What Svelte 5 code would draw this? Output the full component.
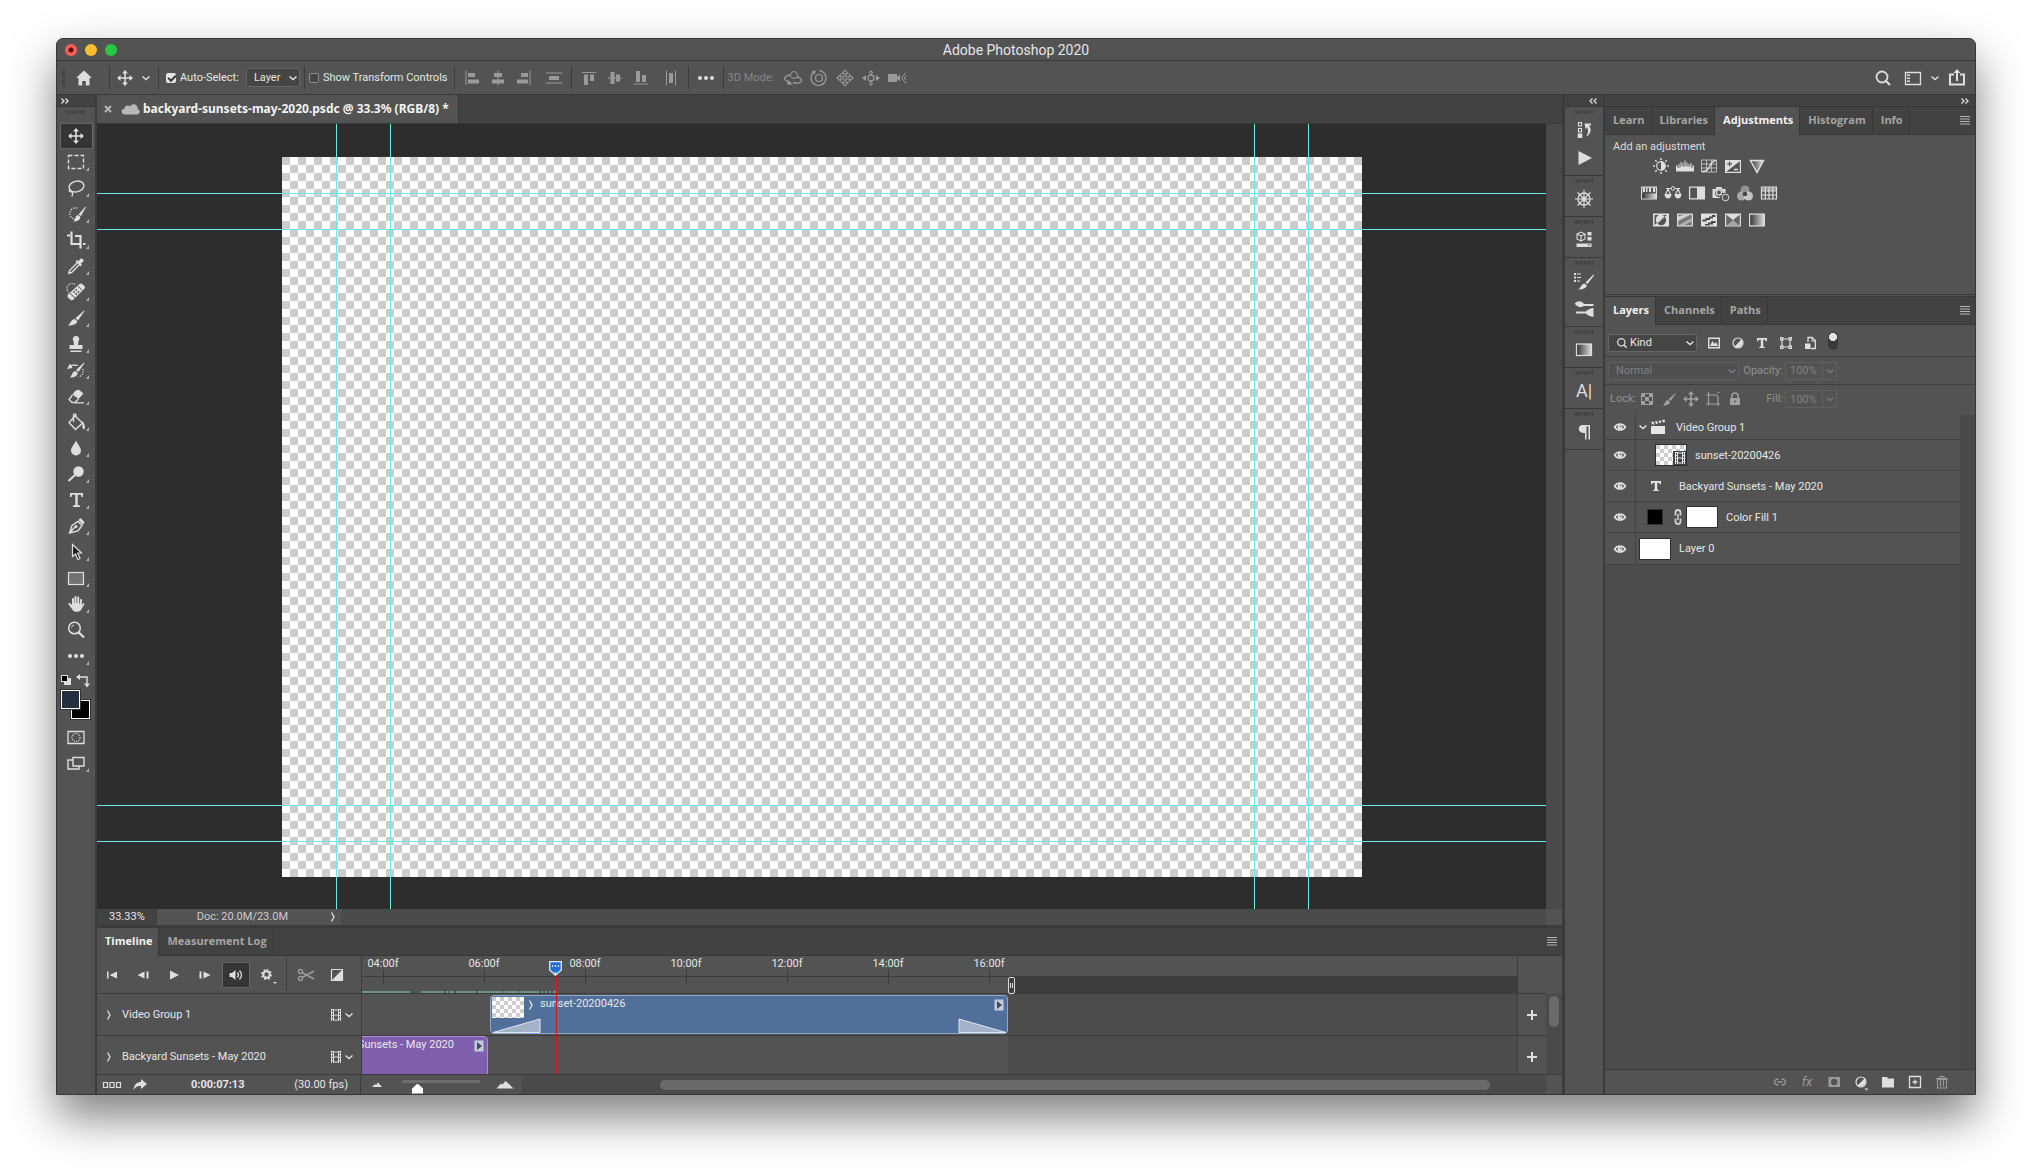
<script>
  const s = (d, w = 1.5) => `<path d="${d}" fill="none" stroke="currentColor" stroke-width="${w}"/>`;
  const dash = (d, w, a) => `<path d="${d}" fill="none" stroke="currentColor" stroke-width="${w}" stroke-dasharray="${a}"/>`;
  const f = (d) => `<path d="${d}" fill="currentColor" fill-rule="evenodd"/>`;
  const brush = 'M20 4.5 20.5 5 14 14.5 11.5 12.3ZM10.8 13 13.3 15.3C13 18 10 19.5 4 19.5 6.500 17.500 7 13.500 10.800 13Z';

  const icons = {
    move: s('M12 6V18M6 12H18', 1.6) + f('M12 4 15 7.500H9ZM12 20 15 16.500H9ZM4 12 7.500 9V15ZM20 12 16.500 9V15Z'),
    marquee: dash('M4.500 5.500H19.500V18.500H4.500Z', 1.4, '4 2'),
    lasso: '<ellipse cx="12.500" cy="10.500" rx="7.500" ry="5.300" transform="rotate(-12 12.500 10.500)" fill="none" stroke="currentColor" stroke-width="1.400"/>' + s('M6 13C4 15 6 16.500 8 15.500M7.500 15.500C10 17 8 19 8 20.500', 1.3),
    quick: dash('M13 6A5.500 5.500 0 1 0 10 17', 1.3, '1.300 1.300') + f('M21.500 4.500 22 5 17 14 14.500 12.500ZM14 13 16.500 15C16 18 13.500 19.500 9.500 19.500 11.500 17 11 14 14 13Z'),
    crop: s('M7.500 3.500V16H16M11 8H16.500V16M16.500 16V20.500M3 7.500H6M19 16H21.500', 2.2),
    dropper: s('M13 9 5.500 16.500 4.800 19.200 7.500 18.500 15 11', 1.4) + f('M11.500 7.500 13 6 14.200 7.200 16.500 4.700C18 3.500 20.500 6 19.300 7.500L16.800 9.800 18 11 16.500 12.500Z'),
    heal: dash('M11 4.500A5 5 0 1 0 5 12.500', 1.2, '1.200 1.200') + f('M15.500 4C16.500 3 17.800 3.300 20 5.500 21.500 7 21 8 20.300 8.800L9.500 19.500C8 20.700 7 20.500 5 18.500 3 16.500 3 15.500 4 14.500Z') + '<path d="M13.600 5.800 18.500 10.700M6.100 13.300 11 18" stroke="#535353"/><circle cx="12.200" cy="9.900" r=".9" fill="#535353"/><circle cx="14.400" cy="12" r=".9" fill="#535353"/><circle cx="10.200" cy="11.900" r=".9" fill="#535353"/><circle cx="12.300" cy="14" r=".9" fill="#535353"/>',
    brush: f(brush),
    stamp: f('M12 4A3 3 0 0 1 14.500 9L14 13H18.500V17H5.500V13H10L9.500 9A3 3 0 0 1 12 4ZM6.500 18.500H17.500V20H6.500Z'),
    history: f('M20 4.500 20.500 5 14.500 14 12 12ZM11.500 13 13.800 15C13 18 11 19.500 6 19.500 8.500 17 8 13.500 11.500 13ZM3 11 6 5.500 8.500 10Z') + s('M6 8.500C9 6 11 8 14 7', 1.3) + dash('M19 11C19.500 15 18 18 14.500 19', 1.2, '1.200 1.200'),
    eraser: f('M11 7 14.500 5.500 19.500 9.500 14.500 15 8.500 10.500Z') + s('M8.500 11 5 15.500 8 18.500H11L14.500 15M11 18.800H20', 1.3),
    bucket: s('M11 6 18.500 13 11.500 19.500 5 12.500ZM9.500 12V5C9.500 3.500 11.500 3.500 12 5V7', 1.4) + f('M18 11C20 12.500 21.500 16 20.800 18.500 20 20 18.500 19 18.500 17Z'),
    blur: f('M12 4.500C14 9 17 11.500 17 14.500A5 5 0 0 1 7 14.500C7 11.500 10 9 12 4.500Z'),
    dodge: '<circle cx="14.500" cy="9.500" r="5.200" fill="currentColor"/>' + s('M11 13 4.500 19', 2),
    type: f('M6 5H19V9H17.500L17 6.800H13.700V17L16 17.500V19H9V17.500L11.300 17V6.800H8L7.500 9H6Z'),
    typeS: f('M7 7H17V10.300H15.700L15.200 8.700H13.200V15.600L14.700 16V17H9.300V16L10.800 15.600V8.700H8.800L8.300 10.300H7Z'),
    pen: s('M5.500 19 8 11.500 14 7.500 18 11.500 14 17ZM5.500 19 11 13', 1.4) + '<circle cx="12" cy="12.500" r="1.500" fill="currentColor"/>' + f('M14.500 6 16.500 4 20.500 8 19 11Z'),
    select: '<path d="M8.500 4.500V16.500L11.500 14 13.800 19.500 16 18.500 13.700 13H17.500Z" fill="#1d1d1d" stroke="currentColor" stroke-width="1.200"/>',
    rect: '<rect x="4.500" y="6.500" width="15" height="12" fill="#727272" stroke="currentColor" stroke-width="1.200"/>',
    hand: f('M8 13V7A1 1 0 0 1 10 7V11H10.500V5A1 1 0 0 1 12.500 5V11H13.200V5.500A1 1 0 0 1 15.200 5.500V11.500H16V8A1 1 0 0 1 18 8L17.800 13 19 11.500C20 10.500 20.800 11.500 20.200 12.500L17 18C15.500 20.500 9.500 20.500 8.300 17.500L4.500 12.200C4 11 5.500 10.500 6.200 11.300Z'),
    zoom: '<circle cx="10.500" cy="10" r="5.800" fill="none" stroke="currentColor" stroke-width="1.500"/>' + s('M14.800 14.500 20 19.500', 2.4) + s('M7.500 9.500A3.500 3.500 0 0 1 10 7', 1),
    dots: '<circle cx="6" cy="12" r="2" fill="currentColor"/><circle cx="12" cy="12" r="2" fill="currentColor"/><circle cx="18" cy="12" r="2" fill="currentColor"/>',
    mask: s('M4 6.500H20V18.500H4Z', 1.3) + '<circle cx="12" cy="12.500" r="4" fill="none" stroke="currentColor" stroke-width="1.200" stroke-dasharray="1.200 1.200"/>',
    screen: s('M9 6.500H20V15H9ZM9 9H4V18H15V15', 1.4),
    home: f('M12 4.500 20 12H17.500V19.500H13.800V15H10.200V19.500H6.500V12H4Z'),
    chev: s('M8.500 10.500 12 13.500 15.500 10.500', 1.4),
    right: s('M10.500 7.500 13 12 10.500 16.500', 1.3),
    alignL: f('M5.500 4.500H6.500V19H5.500ZM8 7H15V11H8ZM8 13.500H19V17.500H8Z'),
    alignC: f('M11.500 4.500H12.500V7H16V11H12.500V13.500H18V17.500H12.500V19.500H11.500V17.500H6V13.500H11.500V11H8V7H11.500Z'),
    alignR: f('M17.500 4.500H18.500V19H17.500ZM9 7H16V11H9ZM5 13.500H16V17.500H5Z'),
    distV: f('M4 6.500H20V7.500H4ZM7 10H17V14H7ZM4 16.500H20V17.500H4Z'),
    alignT: f('M5 6H19V7H5ZM7 8.500H11V19H7ZM13 8.500H17V15H13Z'),
    alignM: f('M7.500 6H11.500V11.500H13V8.500H17V11.500H19V12.500H17V15.500H13V12.500H11.500V18H7.500V12.500H5V11.500H7.500Z'),
    alignB: f('M5 17.500H19V18.500H5ZM7 5H11V16H7ZM13 9H17V16H13Z'),
    distH: f('M7 4.500H8V19.500H7ZM10 7H14V17H10ZM16 4.500H17V19.500H16Z'),
    orbit: '<circle cx="13" cy="9" r="3.500" fill="none" stroke="currentColor"/>' + s('M9.500 9C5 9 2.500 12 4.500 14.500M16 11C20 12 21.500 14 20 16 18 18 15 17 12 16.500M5 14.500 8 16', 1.3) + f('M7 14 12 18.500H6Z'),
    roll: '<circle cx="12" cy="12" r="3.500" fill="none" stroke="currentColor" stroke-width="1.200"/>' + s('M7 6A7.500 7.500 0 1 0 12 4.500', 1.200) + f('M5 4.500 9 5 7 9Z'),
    pan3: s('M12 4 15 7.500H13V11H16.500V9L20 12 16.500 15V13H13V16.500H15L12 20 9 16.500H11V13H7.500V15L4 12 7.500 9V11H11V7.500H9Z', 1.100),
    slide3: s('M9 12A3 3 0 1 0 15 12 3 3 0 1 0 9 12', 1.300) + f('M12 4 14.500 7H9.500ZM12 20 14.500 17H9.500ZM3 12 7 9V15ZM21 12 17 9V15ZM11.300 6H12.700V9H11.300ZM11.300 15H12.700V18H11.300Z'),
    cam: f('M3 8H12V11L15 8.500V15.500L12 13V16H3Z') + s('M21 6.500 16.500 12 21 17.500M21 10 19 12 21 14', 1),
    search: '<circle cx="11" cy="11" r="5.500" fill="none" stroke="currentColor" stroke-width="1.800"/>' + s('M15 15 19 19', 2.2),
    workspace: s('M4.500 6.500H19.500V18.500H4.500Z', 1.3) + f('M6 8.500H9V10H6ZM6 11.500H9V13H6ZM6 14.500H9V16H6Z'),
    share: s('M9 8.500H5V18.500H19V8.500H15', 2) + s('M12 5V15', 2) + f('M12 3 15.500 7H8.500Z'),
    cloud: f('M7 17.500C2.500 17.500 2.500 12 6.500 11.800 6.500 8.500 10 7.500 12 9.300 14 5.500 20.500 7 19.500 12 23 13 22 17.500 19 17.500Z'),
    close: s('M9 9 15 15M15 9 9 15', 2),
    menu: f('M7 8H17V9H7ZM7 10.500H17V11.500H7ZM7 13H17V14H7ZM7 15.500H17V16.500H7Z'),
    fwd: s('M8.500 9.500 11 12 8.500 14.500M12.500 9.500 15 12 12.500 14.500', 1.3),
    back: s('M11.500 9.500 9 12 11.500 14.500M15.500 9.500 13 12 15.500 14.500', 1.3),
    panelHistory: s('M6.500 4.500H9.500V8H6.500ZM6.500 10.500H9.500V14H6.500Z', 1.200) + f('M5.700 15.500H10.300V20H5.700ZM12.500 5.500H19V7.500L16.800 7.500C20 11 19 16 14 19 16.500 14.500 16.500 12 15 9.200L13.500 11Z'),
    play: f('M6.500 5 20 12 6.500 19Z'),
    wheel: '<circle cx="12" cy="12" r="6" fill="none" stroke="currentColor" stroke-width="1.300"/><circle cx="12" cy="12" r="2" fill="none" stroke="currentColor"/>' + s('M12 3V21M3 12H21M5.500 5.500 18.500 18.500M18.500 5.500 5.500 18.500', 1.100),
    props: s('M5 6 9 4 13 6V11L9 13 5 11ZM5 6 9 8 13 6M9 8V13', 1.1) + f('M15.500 4H19.500V7.500H15.500ZM15.500 9H19.500V12.500H15.500ZM4.500 15.500H19.500V19H4.500Z') + '<path d="M15.500 16.500H18.500L17 18Z" fill="#535353"/>',
    brushSet: f('M2 4H4V6H2ZM2 7.500H4V9.500H2ZM2 11H4V13H2ZM5 4.500H9V5.500H5ZM5 8H9V9H5ZM5 11.500H8V12.500H5ZM21.500 5.500 22 6.500 15.500 15 13.500 13.500ZM12.500 14.500 14.800 16.300C14.500 19 11.500 20.500 6.500 20.500 9 18.500 9.500 15 12.500 14.500Z'),
    brushes: f('M3 6.500C5 3.500 10 3.500 12 7H21.500V9H12C10 10.500 7 10.500 5 9L2.500 6.500ZM4 14.500H14C16 12.500 19 11 21.500 11V20C18 19.500 15.500 18.500 14 16.500H4Z'),
    gradient: '<rect x="4.500" y="6" width="15" height="11.500" fill="url(#gr)" stroke="currentColor" stroke-width="1.200"/>',
    para: f('M11 5H18V19.500H16.500V6.500H14.500V19.500H13V13C5 13.500 5 5 11 5Z'),
    bright: '<circle cx="12" cy="12" r="4.300" fill="none" stroke="currentColor" stroke-width="1.200"/>' + f('M12 7.700A4.300 4.300 0 0 1 12 16.300Z') + s('M12 4V6M12 18V20M4 12H6M18 12H20M6.300 6.300 7.700 7.700M16.300 16.300 17.700 17.700M6.300 17.700 7.700 16.300M16.300 7.700 17.700 6.300', 1.500),
    levels: f('M3 17.500V11.500H4.500V14H5.500V10H6.500V13.500H7.500V8H8.500V12H9.500V9H10.500V13H11.500V6.500H12.500V12H13.500V8.500H14.500V13H15.500V10H16.500V12.500H17.500V9H18.500V14H19.500V11.500H21V17.500Z'),
    curves: s('M4.500 6H19.500V18H4.500ZM9.500 6V18M14.500 6V18M4.500 10H19.500M4.500 14H19.500', .7) + s('M5 17.500C15 17.500 11 7 19 6.500', 1.400),
    exposure: f('M4 6H20V19H4ZM5.200 17.800 18.800 7.200V17.800ZM8 7.500V9.300H6.200V10.500H8V12.300H9.200V10.500H11V9.300H9.200V7.500Z') + s('M13 15.500H17', 1.300),
    vibrance: '<path d="M5.500 6.500H18.500L12 18.500Z" fill="url(#gr)" stroke="currentColor" stroke-width="1.500"/>',
    hue: s('M4.600 6.100H19.400V17.900H4.600Z', 1.200) + f('M6 6.500H8V11H6ZM9 6.500H10.500V11H9ZM12 6.500H14V11H12ZM16 6.500H18V11H16Z') + '<rect x="5" y="12.500" width="14" height="5" fill="url(#gr)"/>',
    balance: s('M5 7.500H19M7 8 4.500 13.500M7 8 9.500 13.500M17 8 14.500 13.500M17 8 19.500 13.500', 1.100) + '<circle cx="12" cy="7.500" r="1.800" fill="#535353" stroke="currentColor"/>' + f('M3.500 13H10.500C10.500 19 3.500 19 3.500 13ZM13.500 13H20.500C20.500 19 13.500 19 13.500 13Z'),
    bw: s('M4.600 6.100H19.400V17.900H4.600Z', 1.300) + f('M12 6H19V18H12Z'),
    photo: f('M3.500 8H6.500L7.500 6H12.500L13.500 8H16.500V12H14A4 4 0 1 0 11 16V17H3.500Z') + '<circle cx="10" cy="11.500" r="2.600" fill="none" stroke="currentColor" stroke-width="1.300"/><circle cx="16.500" cy="16.500" r="3.300" fill="#535353" stroke="currentColor"/>',
    mixer: '<circle cx="12" cy="9" r="4.500" fill="#929292"/><circle cx="8.500" cy="15" r="4.500" fill="#a9a9a9"/><circle cx="15.500" cy="15" r="4.500" fill="#e0e0e0" fill-opacity=".8"/><circle cx="12" cy="13" r="2.300" fill="#444"/>',
    lookup: s('M4.500 6H19.500V18H4.500ZM8.300 6V18M12 6V18M15.800 6V18M4.500 10H19.500M4.500 14H19.500', 1.200) + '<path d="M5 6.500H19V9.500H5Z" fill="currentColor" fill-opacity=".5"/>',
    invert: '<path d="M4 5.500H20V18.500H4Z" fill="#e0e0e0"/><path d="M5.500 17 5.500 7H18Z" fill="#535353"/><path d="M8 15A4.800 4.800 0 0 1 15.500 8.500Z" fill="#e0e0e0"/><path d="M16 9A4.800 4.800 0 0 1 8.500 15.500Z" fill="#535353"/>',
    poster: '<rect x="4.600" y="6.100" width="14.800" height="11.800" fill="#777" stroke="currentColor" stroke-width="1.200"/>' + '<path d="M5 8.500 12 6.500H18L5 13Z" fill="#d0d0d0"/><path d="M5 17.500 19 10V13L11 17.500Z" fill="#b4b4b4"/>',
    threshold: '<path d="M4 5.500H20V18.500H4Z" fill="#e0e0e0"/><path d="M5.500 11.500H8.500V10H12V8.500H15V7H18.500V9H16V10.500H13V12H9.500V13.500H5.500ZM8 16H11V14.500H14V13H18.500V15H16V16.500H12.500V17.500H8Z" fill="#484848"/>',
    selective: '<rect x="4.600" y="6.100" width="14.800" height="11.800" fill="#666" stroke="currentColor" stroke-width="1.200"/>' + f('M4.500 6H19.500L12 12Z') + '<path d="M5 18H19L12 12Z" fill="#a5a5a5"/>',
    gmap: '<rect x="4.600" y="6.100" width="14.800" height="11.800" fill="url(#gr)" stroke="currentColor" stroke-width="1.200"/>',
    image: s('M6.700 7.200H17.300V16.800H6.700Z', 1.400) + f('M8 15 10.500 10 12.500 13 14 11 16 15Z'),
    adjust: '<circle cx="12" cy="12" r="5" fill="none" stroke="currentColor" stroke-width="1.200"/>' + f('M15.500 8.500A5 5 0 0 1 8.500 15.500Z'),
    adjustMenu: '<circle cx="12" cy="12" r="5" fill="none" stroke="currentColor" stroke-width="1.200"/>' + f('M15.500 8.500A5 5 0 0 1 8.500 15.500ZM15.500 18.500H19.500L17.500 20.500Z'),
    shape: s('M8 8H16V16H8Z', 1.200) + f('M6 6H9.500V9.500H6ZM14.500 6H18V9.500H14.500ZM6 14.500H9.500V18H6ZM14.500 14.500H18V18H14.500Z') + '<path d="M7.200 7.200H8.300V8.300H7.200ZM15.700 7.200H16.800V8.300H15.700ZM7.200 15.700H8.300V16.800H7.200ZM15.700 15.700H16.800V16.800H15.700Z" fill="#535353"/>',
    smart: s('M10 11V6.500H14L17.300 9.500V17.500H13', 1.300) + f('M7 12.500H12.500V18H7ZM13.500 6.500H14.500V9.500H17.500V10.500H13.500Z'),
    checker: s('M6.500 6.500H17.500V17.500H6.500Z', 1) + f('M6.500 6.500H10V10H6.500ZM14 6.500H17.500V10H14ZM10 10H14V14H10ZM6.500 14H10V17.500H6.500ZM14 14H17.500V17.500H14Z'),
    lockBrush: f('M18.500 6 19 6.500 13.500 14 11.500 12.300ZM11 13 13 14.800C12.500 17.500 10.500 18.500 6 18.500 8 17 8 13.500 11 13Z'),
    artboard: s('M7.500 5V18.500M5 8H15.500L17 10V19M5 17H19M16.500 6 18.500 5', 1.200),
    lock: f('M7 11H17V18H7ZM11.300 13.500V15.500H12.700V13.500Z') + s('M9 11V9A3 3 0 0 1 15 9V11', 1.600),
    eye: s('M6.500 12C9 8 15 8 17.500 12 15 16 9 16 6.500 12Z', 1.500) + '<circle cx="12" cy="12" r="2.500" fill="currentColor"/><circle cx="12.700" cy="11.500" r=".8" fill="#535353"/>',
    clap: f('M5 11H19V19H5ZM5 7 7.500 6.500 8.500 9.500H6.500ZM9 6.300 11 6 12 8.500 10 9ZM12.500 5.800 14.500 5.400 15.500 7.800 13.500 8.300ZM16 5 18.500 4.500 19 7 17 7.500Z'),
    link: s('M9.500 10.500V7.500A2.500 2.500 0 0 1 14.500 7.500V10.500M9.500 13.500V16.500A2.500 2.500 0 0 0 14.500 16.500V13.500', 1.800) + s('M12 9V15', 1.500),
    linkH: s('M10.500 9.300H8.500A2.800 2.800 0 0 0 8.500 14.700H10.500M13.500 9.300H15.500A2.800 2.800 0 0 1 15.500 14.700H13.500M9.500 12H14.500', 1.400),
    addMask: f('M6.500 7H18V17H6.500ZM12.200 8.700A3.200 3.200 0 1 0 12.200 15.200 3.200 3.200 0 1 0 12.200 8.700Z'),
    folder: f('M6 7H11L12 8.500H18V17.500H6Z'),
    add: s('M6.500 6.500H17.500V17.500H6.500Z', 1.300) + s('M12 9.500V14.500M9.500 12H14.500', 1.300),
    trash: s('M7.500 9.500H16.500V18H7.500ZM6 8.500H18M10 8V6.500H14V8M10.500 10V16.500M13.500 10V16.500', 1.100),
    first: f('M7 8.500H8.500V15.500H7ZM9.500 12 17 8.500V15.500Z'),
    prev: f('M6.500 12 13.500 8.500V15.500ZM15.500 8.500H17.500V15.500H15.500Z'),
    playS: f('M8 7.500 17 12 8 16.500Z'),
    next: f('M6.500 8.500H8.500V15.500H6.500ZM10.500 8.500 17.500 12 10.500 15.500Z'),
    audio: f('M5.500 10H8L11.500 7V17L8 14H5.500Z') + s('M13.500 9.500Q15.500 12 13.500 14.500M15.500 7.500Q19.500 12 15.500 16.500', 1.300),
    gear: '<circle cx="11.500" cy="11.500" r="3.200" fill="none" stroke="currentColor" stroke-width="2"/>' + dash('M11.500 7A4.500 4.500 0 1 1 11.490 7', 2, '1.800 1.734') + f('M18 19H22L20 21Z'),
    scissors: '<circle cx="6.500" cy="8.500" r="2" fill="none" stroke="currentColor" stroke-width="1.300"/><circle cx="6.500" cy="15.500" r="2" fill="none" stroke="currentColor" stroke-width="1.300"/>' + s('M8 9.500 20 16M8 14.500 20 8', 1.500),
    split: s('M6.500 6.500H17.500V17.500H6.500Z', 1.200) + f('M17.500 6.500V17.500H6.500Z'),
    film: s('M7.500 6V18M16.500 6V18M9.500 6V18M14.500 6V18M9.500 7H14.500M9.500 12H14.500M9.500 17H14.500', 1) + dash('M8.500 6V18M15.500 6V18', 2, '1 2'),
    boxes: s('M3.500 9.500H7.500V14.500H3.500ZM10 9.500H14V14.500H10ZM16.500 9.500H20.500V14.500H16.500Z', 1.200),
    export: f('M13 6 19 11 13 16V13C9.500 12.500 7.500 14 5.500 17 6 11.500 9 9 13 9Z'),
    hillS: f('M7 14 10 11 11 12 13 9.500 17 14Z'),
    hillL: f('M3.500 15.500 8 10.500 9.500 11.500 12.500 8 16 11 20.500 15.500Z'),
    plus: s('M12 7V17M7 12H17', 2),
    swap: s('M8 9H16V17', 1.400) + f('M5 9 9 6V12ZM16 19.500 13 15.500H19Z'),
    clipPlay: '<rect x="7.500" y="6.500" width="9" height="11" fill="#c3cbd8"/><path d="M10 8 15 12 10 16Z" fill="#444a63"/>'
  };

  const tools = [
    ['move', 'Move'], ['marquee', 'Marquee'], ['lasso', 'Lasso'], ['quick', 'Quick Selection'], ['crop', 'Crop'],
    ['dropper', 'Eyedropper'], ['heal', 'Spot Healing'], ['brush', 'Brush'], ['stamp', 'Clone Stamp'], ['history', 'History Brush'],
    ['eraser', 'Eraser'], ['bucket', 'Paint Bucket'], ['blur', 'Blur'], ['dodge', 'Dodge'], ['type', 'Type'], ['pen', 'Pen'],
    ['select', 'Path Selection'], ['rect', 'Rectangle'], ['hand', 'Hand'], ['zoom', 'Zoom'], ['dots', 'Edit Toolbar']
  ];
  const noMore = ['move', 'zoom'];
  const dock = [['panelHistory', 'play'], ['wheel'], ['props'], ['brushSet', 'brushes'], ['gradient'], ['char'], ['para']];
  const adjustments = [
    ['bright', 'levels', 'curves', 'exposure', 'vibrance'],
    ['hue', 'balance', 'bw', 'photo', 'mixer', 'lookup'],
    ['invert', 'poster', 'threshold', 'selective', 'gmap']
  ];
  const filters = ['image', 'adjust', 'typeS', 'shape', 'smart'];
  const locks = ['checker', 'lockBrush', 'move', 'artboard', 'lock'];
  const layers = [
    { name: 'Video Group 1', kind: 'folder' },
    { name: 'sunset-20200426', kind: 'video' },
    { name: 'Backyard Sunsets - May 2020', kind: 'text' },
    { name: 'Color Fill 1', kind: 'solid' },
    { name: 'Layer 0', kind: 'plain' }
  ];
  const footer = ['linkH', 'fx', 'addMask', 'adjustMenu', 'folder', 'add', 'trash'];
  const guides = [5, 10, 90, 95];
  const ticks = ['04:00f', '06:00f', '08:00f', '10:00f', '12:00f', '14:00f', '16:00f'].map((label, i) => ({ label, x: 21 + i * 101 }));
  const cached = [[0, 48], [58, 1], [60, 22], [84, 2], [87, 5], [94, 20], [116, 24], [141, 15], [157, 20], [179, 2], [183, 2], [187, 2], [191, 4]];
  const tracks = ['Video Group 1', 'Backyard Sunsets - May 2020'];
</script>

{#snippet icon(name)}
  <svg class="icon" viewBox="0 0 24 24" aria-hidden="true">{@html icons[name]}</svg>
{/snippet}

{#snippet btn(name, label, cls = '')}
  <button class="ib {cls}" aria-label={label}>{@render icon(name)}</button>
{/snippet}

<svg class="defs" aria-hidden="true">
  <linearGradient id="gr"><stop offset="0" stop-color="#333" /><stop offset="1" stop-color="#ddd" /></linearGradient>
</svg>

<div class="desktop">
  <div class="window">
    <header class="title">
      <div class="lights"><i class="red"></i><i class="yellow"></i><i class="green"></i></div>
      <h1>Adobe Photoshop 2020</h1>
    </header>

    <div class="options">
      <span class="vgrip"></span>
      {@render btn('home', 'Home', 'home')}
      <span class="sep"></span>
      {@render btn('move', 'Move tool', 'movetool')}
      {@render btn('chev', 'Tool presets', 'narrow')}
      <span class="sep"></span>
      <label class="check"><input type="checkbox" checked />Auto-Select:</label>
      <span class="drop layer"><select aria-label="Auto-select target"><option>Layer</option></select>{@render icon('chev')}</span>
      <span class="sep tight"></span>
      <label class="check last"><input type="checkbox" />Show Transform Controls</label>
      <span class="sep"></span>
      <div class="aligns">
        {#each ['alignL', 'alignC', 'alignR'] as n}{@render btn(n, n, 'dim')}{/each}
        {@render btn('distV', 'Distribute vertically', 'dim spaced')}
      </div>
      <span class="sep"></span>
      <div class="aligns">
        {#each ['alignT', 'alignM', 'alignB'] as n}{@render btn(n, n, 'dim')}{/each}
        {@render btn('distH', 'Distribute horizontally', 'dim spaced')}
      </div>
      <span class="sep"></span>
      {@render btn('dots', 'More options', 'more')}
      <span class="sep"></span>
      <span class="mode">3D Mode:</span>
      <div class="modes">
        {#each ['orbit', 'roll', 'pan3', 'slide3', 'cam'] as n}{@render btn(n, n, 'dim')}{/each}
      </div>
      <div class="actions">
        {@render btn('search', 'Search')}
        {@render btn('workspace', 'Workspace')}
        {@render btn('chev', 'Choose workspace', 'narrow')}
        {@render btn('share', 'Share')}
      </div>
    </div>

    <div class="body">
      <aside class="toolbar">
        <div class="strip">{@render btn('fwd', 'Expand tools')}</div>
        <span class="grip"></span>
        <div class="tools">
          {#each tools as [name, label], i}
            <button class="tool" class:active={i === 0} class:flyout={!noMore.includes(name)} aria-label={label}>{@render icon(name)}</button>
          {/each}
        </div>
        <div class="mini">
          <button class="default" aria-label="Default colors"></button>
          {@render btn('swap', 'Swap colors', 'swap')}
        </div>
        <div class="swatches">
          <button class="bg" aria-label="Background color"></button>
          <button class="fg" aria-label="Foreground color"></button>
        </div>
        <div class="tools">
          <button class="tool" aria-label="Quick mask">{@render icon('mask')}</button>
          <button class="tool flyout" aria-label="Screen mode">{@render icon('screen')}</button>
        </div>
      </aside>

      <main>
        <div class="doctabs">
          <div class="doctab">
            {@render btn('close', 'Close document', 'close')}
            <span class="cloud">{@render icon('cloud')}</span>
            <span>backyard-sunsets-may-2020.psdc @ 33.3% (RGB/8) *</span>
          </div>
        </div>
        <div class="work">
          <div class="stage">
            <div class="artboard">
              {#each guides as g}
                <i class="guide v" style="left: {g}%"></i>
                <i class="guide h" style="top: {g}%"></i>
              {/each}
            </div>
          </div>
          <div class="vscroll"></div>
        </div>
        <div class="status">
          <span class="pct">33.33%</span>
          <button class="docinfo"><span>Doc: 20.0M/23.0M</span>{@render icon('right')}</button>
          <span class="corner"></span>
        </div>

        <section class="timeline">
          <div class="tabs">
            <button class="tab on">Timeline</button>
            <button class="tab">Measurement Log</button>
            {@render btn('menu', 'Timeline menu', 'menu')}
          </div>
          <div class="tgrid">
            <div class="controls">
              {@render btn('first', 'First frame')}
              {@render btn('prev', 'Previous frame')}
              {@render btn('playS', 'Play')}
              {@render btn('next', 'Next frame')}
              {@render btn('audio', 'Audio', 'pressed')}
              {@render btn('gear', 'Settings')}
              <span class="sep"></span>
              {@render btn('scissors', 'Split at playhead', 'dim')}
              {@render btn('split', 'Transitions', 'split')}
            </div>
            <div class="heads">
              {#each tracks as t}
                <div class="head">
                  {@render btn('right', 'Expand ' + t, 'narrow')}
                  <span>{t}</span>
                  {@render btn('film', 'Track options', 'filmb')}
                  {@render btn('chev', 'Track menu', 'chevb')}
                </div>
              {/each}
            </div>
            <div class="lanes">
              <div class="ruler">
                {#each ticks as t}
                  <span class="tick" style="left: {t.x}px">{t.label}</span>
                {/each}
                <span class="outside"></span>
                {#each cached as [x, w]}<i class="cache" style="left: {x}px; width: {w}px"></i>{/each}
                <span class="handle"></span>
              </div>
              <div class="lane">
                <div class="clip blue">
                  <span class="cthumb"></span>
                  {@render icon('right')}
                  <span class="cname">sunset-20200426</span>
                  <span class="cplay">{@render icon('clipPlay')}</span>
                  <svg class="fade in" viewBox="0 0 49 15" aria-hidden="true"><path d="M1 14.500 48 1V14.500Z" /></svg>
                  <svg class="fade out" viewBox="0 0 49 15" aria-hidden="true"><path d="M48 14.500 1 1V14.500Z" /></svg>
                </div>
              </div>
              <div class="lane">
                <div class="clip purple">
                  <span class="cname">Backyard Sunsets - May 2020</span>
                  <span class="cplay">{@render icon('clipPlay')}</span>
                </div>
              </div>
              <svg class="playhead" viewBox="0 0 13 15" aria-hidden="true"><path d="M.700 .700H12.300V9L6.500 14.300 .700 9Z" fill="#1f6fd6" stroke="#dfe8f5" stroke-width="1.300" /><path d="M3 5H4.300M5.900 5H7.200M8.800 5H10.100M6.500 11V14" stroke="#fff" stroke-width="1.300" /></svg>
              <i class="needle"></i>
            </div>
            <div class="adds">
              <span></span>
              {@render btn('plus', 'Add media to Video Group 1')}
              {@render btn('plus', 'Add media to Backyard Sunsets')}
            </div>
            <div class="tscroll"><i></i></div>
          </div>
          <div class="tfoot">
            <div class="left">
              {@render btn('boxes', 'Convert to frame animation')}
              {@render btn('export', 'Render video')}
              <b>0:00:07:13</b>
              <span>(30.00 fps)</span>
            </div>
            <div class="zoomer">
              {@render icon('hillS')}
              <input type="range" min="0" max="100" value="15" aria-label="Timeline zoom" />
              {@render icon('hillL')}
            </div>
            <div class="hscroll"><i></i></div>
            <span class="corner"></span>
          </div>
        </section>
      </main>

      <aside class="dock">
        <div class="strip">{@render btn('back', 'Expand panels')}</div>
        {#each dock as set}
          <div class="dockset">
            <span class="grip"></span>
            {#each set as n}
              <button class="ib" aria-label={n}>
                {#if n === 'char'}<span class="char">A|</span>{:else}{@render icon(n)}{/if}
              </button>
            {/each}
          </div>
        {/each}
      </aside>

      <aside class="panels">
        <div class="strip">{@render btn('fwd', 'Collapse panels')}</div>
        <section class="adj">
          <div class="tabs">
            {#each ['Learn', 'Libraries', 'Adjustments', 'Histogram', 'Info'] as t}
              <button class="tab" class:on={t === 'Adjustments'}>{t}</button>
            {/each}
            {@render btn('menu', 'Adjustments menu', 'menu')}
          </div>
          <p>Add an adjustment</p>
          <div class="adjrows">
            {#each adjustments as row}
              <div>{#each row as n}{@render btn(n, n)}{/each}</div>
            {/each}
          </div>
        </section>
        <section class="layers">
          <div class="tabs">
            {#each ['Layers', 'Channels', 'Paths'] as t}
              <button class="tab" class:on={t === 'Layers'}>{t}</button>
            {/each}
            {@render btn('menu', 'Layers menu', 'menu')}
          </div>
          <div class="row filter">
            <span class="drop kind"><span class="mag">{@render icon('search')}</span><select aria-label="Filter kind"><option>Kind</option></select>{@render icon('chev')}</span>
            <div class="filters">{#each filters as n}{@render btn(n, n)}{/each}</div>
            <input class="toggle" type="checkbox" aria-label="Layer filtering" />
          </div>
          <div class="row blend">
            <span class="drop mode2"><select aria-label="Blend mode" disabled><option>Normal</option></select>{@render icon('chev')}</span>
            <label class="num"><span>Opacity:</span><input type="text" value="100%" disabled /></label>
            <button class="numdrop" aria-label="Opacity slider" disabled>{@render icon('chev')}</button>
          </div>
          <div class="row lockrow">
            <span class="locklabel">Lock:</span>
            <div class="locks">{#each locks as n}{@render btn(n, n)}{/each}</div>
            <label class="num short"><span>Fill:</span><input type="text" value="100%" disabled /></label>
            <button class="numdrop" aria-label="Fill slider" disabled>{@render icon('chev')}</button>
          </div>
          <div class="list">
            {#each layers as l}
              <div class="item {l.kind}">
                {@render btn('eye', 'Visibility of ' + l.name, 'eyeb')}
                <div class="content">
                  {#if l.kind === 'folder'}
                    <span class="tw">{@render icon('chev')}</span><span class="clap">{@render icon('clap')}</span>
                  {:else if l.kind === 'video'}
                    <span class="thumb trans"><span class="badge">{@render icon('film')}</span></span>
                  {:else if l.kind === 'text'}
                    <span class="tt">{@render icon('typeS')}</span>
                  {:else if l.kind === 'solid'}
                    <span class="black"></span><span class="chain">{@render icon('link')}</span><span class="thumb"></span>
                  {:else}
                    <span class="thumb"></span>
                  {/if}
                  <span class="name">{l.name}</span>
                </div>
              </div>
            {/each}
          </div>
          <div class="foot">
            {#each footer as n}
              {#if n === 'fx'}<button class="ib dim fx">fx</button>
              {:else}{@render btn(n, n, n === 'linkH' || n === 'addMask' || n === 'trash' ? 'dim' : '')}{/if}
            {/each}
          </div>
        </section>
      </aside>
    </div>
  </div>
</div>

<style>
  :global(body) { background: #fff; }
  * { box-sizing: border-box; }
  .defs { position: absolute; width: 0; height: 0; }
  .desktop {
    display: flex; min-height: 100vh; padding: 38px 56px 74px; background: #fff;
    font-family: Roboto, "Liberation Sans", sans-serif; font-size: 11px; line-height: 16px; color: #e6e6e6;
  }
  .window {
    flex: 1; min-width: 0; display: flex; flex-direction: column; overflow: hidden;
    background: #535353; border: 1px solid #383838; border-radius: 7px 7px 0 0;
    box-shadow: 0 22px 46px rgba(0, 0, 0, .5);
  }
  button { font: inherit; color: inherit; background: none; border: 0; padding: 0; margin: 0; }
  .icon { display: block; width: 24px; height: 24px; flex: none; }
  .ib { display: flex; align-items: center; justify-content: center; width: 24px; height: 24px; flex: none; color: #dedede; }
  .dim { color: #9a9a9a; }
  .narrow { width: 16px; }

  .title { display: flex; align-items: center; justify-content: center; height: 22px; border-bottom: 1px solid #383838; position: relative; flex: none; }
  .title h1 { margin: 0; font-size: 14px; font-weight: 400; line-height: 20px; }
  .lights { position: absolute; left: 8px; display: flex; gap: 8px; }
  .lights i { width: 12px; height: 12px; border-radius: 50%; }
  .red { background: radial-gradient(circle, #5a0d0a 2px, #fb5f57 3px); }
  .yellow { background: #fdbc2e; }
  .green { background: #28c840; }

  .options { display: flex; align-items: center; height: 34px; padding: 0 6px 0 5px; border-bottom: 1px solid #383838; flex: none; }
  .vgrip { width: 3px; height: 20px; background: repeating-linear-gradient(#3c3c3c 0 1px, #535353 1px 2px); }
  .home { margin: 0 13px 0 7px; }
  .sep { width: 1px; height: 23px; background: #3c3c3c; flex: none; }
  .movetool { margin: 0 1px 0 3px; }
  .options .narrow { margin-right: 4px; }
  .check { display: flex; align-items: center; gap: 4px; padding: 0 7px; white-space: nowrap; }
  .check.last { padding: 0 6px 0 4px; }
  .check input { appearance: none; width: 10px; height: 10px; margin: 0; border: 1px solid #8d8d8d; border-radius: 2px; background: #454545; }
  .check input:checked { background: #e3e3e3; border-color: #e3e3e3; position: relative; }
  .check input:checked::after { content: ""; position: absolute; left: 1px; top: 1px; width: 6px; height: 3px; border: solid #333; border-width: 0 0 2px 2px; transform: rotate(-45deg); }
  .drop { display: flex; align-items: center; position: relative; background: #454545; border: 1px solid #666; border-radius: 2px; }
  .drop select { appearance: none; width: 100%; height: 100%; border: 0; background: none; color: inherit; font: inherit; padding: 0 0 0 7px; margin: 0; opacity: 1; }
  .drop > .icon { position: absolute; right: -6px; }
  .layer { width: 54px; height: 19px; margin-right: 4px; }
  .aligns { display: flex; gap: 2px; padding: 0 5px; }
  .spaced { margin-left: 4px; }
  .more { margin: 0 5px; }
  .mode { margin: 0 7px 0 4px; color: #868686; white-space: nowrap; }
  .modes { display: flex; gap: 2px; }
  .actions { display: flex; align-items: center; gap: 6px; margin-left: auto; }
  .actions .narrow { margin: 0 -4px; }

  .body { display: flex; flex: 1; min-height: 0; background: #3b3b3b; }
  .strip { display: flex; align-items: center; height: 12px; background: #424242; border-bottom: 1px solid #383838; flex: none; }
  .strip .ib { height: 11px; }
  .grip { display: block; width: 20px; height: 4px; margin: 3px auto; background: repeating-linear-gradient(90deg, #3e3e3e 0 1px, #535353 1px 2px); flex: none; }

  .toolbar { display: flex; flex-direction: column; width: 38px; margin-right: 2px; background: #535353; flex: none; }
  .toolbar .strip .ib { margin-left: -4px; }
  .tools { display: flex; flex-direction: column; align-items: center; }
  .toolbar .grip + .tools { margin-top: 6px; }
  .tool { display: flex; align-items: center; justify-content: center; width: 33px; height: 26px; position: relative; color: #dedede; border: 1px solid transparent; border-radius: 2px; }
  .tool.active { background: #353535; border-color: #676767; }
  .flyout::after { content: ""; position: absolute; right: 3px; bottom: 3px; border: solid transparent; border-width: 4px 0 0 4px; border-bottom: 0; border-right: 3px solid #b0b0b0; }
  .mini { display: flex; align-items: center; justify-content: space-between; height: 21px; padding: 0 0 0 4px; }
  .default { width: 10px; height: 10px; background: linear-gradient(#000, #000) 1px 1px / 5px 5px no-repeat, linear-gradient(#ddd, #ddd) 0 0 / 7px 7px no-repeat, linear-gradient(#ddd, #ddd) 3px 3px / 7px 7px no-repeat; }
  .swatches { position: relative; height: 34px; }
  .swatches button { position: absolute; width: 19px; height: 19px; border: 1px solid #fff; outline: 1px solid #333; }
  .fg { left: 4px; top: 0; background: #232f40; }
  .bg { left: 14px; top: 10px; background: #000; }

  main { flex: 1; min-width: 0; display: flex; flex-direction: column; margin-right: 3px; }
  .doctabs { display: flex; height: 29px; background: #424242; border-bottom: 1px solid #383838; flex: none; }
  .doctab { display: flex; align-items: center; padding-right: 9px; background: #535353; border-right: 1px solid #383838; font-family: "Noto Sans", "Open Sans", sans-serif; font-size: 12px; font-weight: 700; color: #f2f2f2; white-space: nowrap; }
  .close { color: #b5b5b5; width: 22px; }
  .cloud { color: #b8b8b8; margin-left: -1px; margin-right: 1px; }
  .work { flex: 1; display: flex; min-height: 0; }
  .stage { flex: 1; display: grid; place-content: center; overflow: hidden; padding-left: 1px; background: #2d2d2d; }
  .artboard { position: relative; width: 1080px; height: 720px; background: repeating-conic-gradient(#fff 0 25%, #ccc 0 50%) 0 0 / 16px 16px; }
  .guide { position: absolute; background: #6ce8ec; }
  .guide.v { width: 1px; top: -1000px; bottom: -1000px; }
  .guide.h { height: 1px; left: -2000px; right: -2000px; }
  .vscroll { width: 16px; background: #4a4a4a; }
  .status { display: flex; height: 16px; background: #4b4b4b; flex: none; }
  .pct { width: 60px; padding-left: 12px; background: #424242; }
  .docinfo { display: flex; align-items: center; justify-content: flex-end; width: 184px; gap: 33px; background: #535353; color: #ccc; }
  .docinfo .icon { margin-right: -4px; color: #e0e0e0; }
  .corner { width: 16px; margin-left: auto; background: #535353; }

  .tabs { display: flex; height: 28px; background: #424242; border-bottom: 1px solid #383838; flex: none; font-family: "Open Sans", "Noto Sans", sans-serif; font-size: 11px; }
  .tab { padding: 0 6px 1px 8px; color: #a6a6a6; font-weight: 700; border-right: 1px solid #383838; white-space: nowrap; }
  .tab.on { background: #535353; color: #f2f2f2; margin-bottom: -1px; padding-bottom: 2px; }
  .tabs .menu { margin: 1px -2px 0 auto; color: #b5b5b5; }

  .timeline { display: flex; flex-direction: column; margin-top: 3px; background: #535353; flex: none; }
  .tgrid { display: grid; grid-template-columns: 264px 1fr 28px 16px; grid-template-rows: 38px 80px; border-bottom: 1px solid #3c3c3c; overflow: hidden; }
  .controls { display: flex; align-items: center; gap: 7px; padding-left: 3px; border-bottom: 1px solid #3c3c3c; grid-column: 1; }
  .controls .sep { height: 32px; }
  .pressed { width: 28px; height: 26px; margin: 0 -2px; background: #353535; border: 1px solid #676767; border-radius: 2px; }
  .heads { grid-column: 1; grid-row: 2; }
  .head { display: flex; align-items: center; height: 42px; padding: 1px 0 0 4px; border-bottom: 1px solid #3c3c3c; }
  .head .narrow { margin-right: 5px; }
  .filmb { margin-left: auto; width: 14px; }
  .chevb { width: 12px; margin-right: 6px; }
  .lanes { grid-column: 2; grid-row: 1 / 3; position: relative; overflow: hidden; border: solid #3c3c3c; border-width: 0 1px; }
  .ruler { position: relative; height: 38px; background: linear-gradient(#3c3c3c, #3c3c3c) 0 20px / 100% 1px no-repeat; border-bottom: 1px solid #3c3c3c; }
  .tick { position: absolute; top: 0; width: 60px; margin-left: -30px; text-align: center; }
  .tick::after { content: ""; position: absolute; left: 30px; top: 13px; width: 1px; height: 15px; background: #3c3c3c; }
  .outside { position: absolute; left: 646px; right: 0; top: 20px; bottom: 0; background: #3e3e3e; }
  .cache { position: absolute; bottom: 0; height: 2px; background: #6b9488; }
  .handle { position: absolute; left: 646px; top: 21px; width: 7px; height: 17px; border: 1px solid #ddd; border-radius: 2px; background: linear-gradient(90deg, #ddd 0 1px, transparent 1px 2px, #ddd 2px 3px) 1px 5px / 3px 5px no-repeat #3e3e3e; }
  .lane { position: relative; height: 42px; border-bottom: 1px solid #3c3c3c; background: linear-gradient(90deg, #535353 646px, #4c4c4c 646px); }
  .clip { position: absolute; border-radius: 4px; color: #e8e8e8; white-space: nowrap; }
  .blue { left: 128px; top: 1px; width: 518px; height: 39px; background: #50709b; border: 1px solid #8fa9cd; display: flex; align-items: flex-start; }
  .cthumb { width: 32px; height: 21px; margin: 1px 0 0 1px; background: repeating-conic-gradient(#fff 0 25%, #ccc 0 50%) 0 0 / 8px 8px; }
  .blue > .icon { margin: -3px -3px 0 -5px; }
  .cplay { position: absolute; right: -4px; top: -3px; }
  .fade { position: absolute; bottom: 0; width: 49px; height: 15px; fill: #a3b2c9; stroke: #dfe5ee; }
  .fade.in { left: 1px; }
  .fade.out { right: 0; }
  .purple { right: calc(100% - 126px); top: 0; height: 44px; background: #7f5fae; border: 1px solid #ab8fd6; padding: 0 33px 0 20px; }
  .playhead { position: absolute; left: 187px; top: 5px; width: 13px; height: 15px; }
  .needle { position: absolute; left: 194px; top: 19px; bottom: 0; width: 1px; background: #d01818; }
  .adds { grid-column: 3; grid-row: 1 / 3; display: flex; flex-direction: column; }
  .adds > * { height: 42px; width: 28px; border-bottom: 1px solid #3c3c3c; flex: none; }
  .adds > span { height: 38px; }
  .tscroll { grid-column: 4; grid-row: 2; background: #4a4a4a; }
  .tscroll i { display: block; width: 10px; height: 31px; margin: 2px 0 0 3px; border-radius: 5px; background: #6a6a6a; }
  .tfoot { display: flex; height: 19px; background: #4a4a4a; }
  .left { display: flex; align-items: center; width: 264px; background: #535353; border-right: 1px solid #3c3c3c; padding-left: 3px; }
  .tfoot .ib { height: 19px; margin-right: 4px; }
  .left b { margin: 0 auto 0 35px; font-weight: 700; }
  .left span { margin-right: 12px; }
  .zoomer { display: flex; align-items: center; justify-content: space-between; width: 160px; padding: 0 4px; background: #535353; color: #dedede; }
  .zoomer input { appearance: none; width: 78px; height: 18px; margin: 0; background: linear-gradient(#6e6e6e, #6e6e6e) 0 4px / 100% 3px no-repeat; }
  .zoomer input::-webkit-slider-thumb { appearance: none; width: 11px; height: 10px; margin-top: 8px; background: #fff; clip-path: polygon(50% 0, 100% 50%, 100% 100%, 0 100%, 0 50%); }
  .hscroll { flex: 1; padding: 5px 56px 0 139px; }
  .hscroll i { display: block; height: 10px; border-radius: 5px; background: #6a6a6a; }

  .dock { width: 38px; margin-right: 2px; background: #535353; flex: none; display: flex; flex-direction: column; }
  .dock .strip .ib { margin-left: auto; margin-right: -2px; }
  .dockset { padding-bottom: 3px; border-bottom: 1px solid #383838; }
  .dockset .grip { margin-bottom: 2px; }
  .dockset .ib { width: 100%; height: 28px; }
  .char { font-size: 18px; line-height: 24px; }

  .panels { width: 370px; flex: none; display: flex; flex-direction: column; background: #535353; }
  .panels .strip .ib { margin-left: auto; margin-right: -2px; }
  .adj { height: 188px; border-bottom: 1px solid #383838; }
  .adj p { margin: 4px 8px 0; color: #dcdcdc; }
  .adjrows { display: flex; flex-direction: column; align-items: center; width: 208px; gap: 3px; margin-top: -1px; }
  .adjrows div { display: flex; }
  .layers { flex: 1; display: flex; flex-direction: column; margin-top: 1px; border-top: 1px solid #383838; background: #4c4c4c; }
  .row { display: flex; align-items: center; background: #535353; border-bottom: 1px solid #3f3f3f; padding-left: 3px; flex: none; }
  .filter { height: 32px; padding-top: 4px; }
  .kind { width: 89px; height: 18px; }
  .kind select { padding-left: 21px; }
  .mag { position: absolute; left: 5px; top: 0; }
  .mag .icon { width: 16px; height: 16px; }
  .filters { display: flex; padding: 0 6px 0 5px; }
  .toggle { appearance: none; width: 10px; height: 18px; margin: -3px 0 0; border-radius: 5px; background: radial-gradient(circle 4px at 5px 5px, #e0e0e0 4px, transparent 4px) #3a3a3a; }
  .blend { height: 28px; }
  .mode2 { width: 131px; height: 18px; background: #505050; border-color: #606060; color: #808080; }
  .mode2 select, .num input { color: #808080; }
  .num { display: flex; align-items: center; justify-content: flex-end; gap: 2px; width: 84px; color: #8f8f8f; }
  .num input { width: 38px; height: 18px; padding: 0 0 0 4px; border: 1px solid #606060; border-radius: 2px 0 0 2px; background: none; font: inherit; }
  .numdrop { width: 14px; height: 18px; border: 1px solid #606060; border-left: 0; display: flex; align-items: center; justify-content: center; color: #777; flex: none; }
  .lockrow { height: 30px; border-bottom: 0; padding: 0 0 2px 5px; color: #8f8f8f; }
  .locklabel { width: 26px; }
  .locks { display: flex; }
  .locks .ib { color: #a0a0a0; width: 22px; }
  .num.short { width: 77px; }
  .list { display: flex; flex-direction: column; padding-right: 15px; flex: 1; background: linear-gradient(90deg, transparent calc(100% - 15px), #494949 0); }
  .item { display: flex; height: 31px; background: #535353; border-bottom: 1px solid #434343; }
  .item.folder { height: 25px; }
  .item.plain { height: 32px; }
  .eyeb { width: 31px; height: 100%; border-right: 1px solid #434343; }
  .content { display: flex; align-items: center; flex: 1; }
  .name { padding-top: 1px; white-space: nowrap; }
  .tw { margin: 0 -9px 0 -5px; }
  .clap { margin-right: 6px; }
  .thumb { width: 32px; height: 22px; margin: 0 8px 0 3px; background: #fff; border: 1px solid #2e2e2e; flex: none; }
  .trans { margin-left: 19px; position: relative; background: repeating-conic-gradient(#fff 0 25%, #ccc 0 50%) 0 0 / 8px 8px; }
  .badge { position: absolute; right: 0; bottom: 0; width: 13px; height: 14px; background: #444; overflow: hidden; color: #e5e5e5; }
  .badge .icon { margin: -5px 0 0 -5px; }
  .tt { margin: 0 11px 0 8px; }
  .black { width: 16px; height: 16px; margin-left: 11px; background: #000; border: 1px solid #333; flex: none; }
  .chain { margin: 0 -7px 0 3px; color: #d0d0d0; }
  .foot { display: flex; justify-content: flex-end; align-items: center; gap: 3px; height: 25px; padding-right: 21px; border-top: 1px solid #3c3c3c; background: #535353; flex: none; }
  .fx { font-style: italic; font-size: 13px; }
</style>
